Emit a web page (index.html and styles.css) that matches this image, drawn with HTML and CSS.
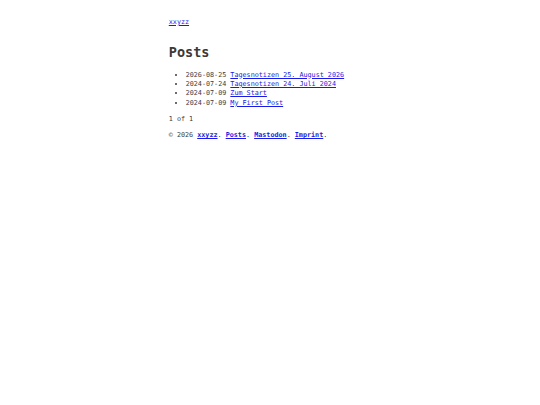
FILE: index.html
```html
<!DOCTYPE html>
<html lang="de">
<head>
<meta charset="utf-8">
<title>Posts</title>
<link rel="stylesheet" href="styles.css">
</head>
<body>
<div class="page">
  <header class="site-header"><a href="#">xxyzz</a></header>
  <main>
    <h1 class="title">Posts</h1>
    <ul class="posts">
      <li>2026-08-25 <a href="#">Tagesnotizen 25. August 2026</a></li>
      <li>2024-07-24 <a href="#">Tagesnotizen 24. Juli 2024</a></li>
      <li>2024-07-09 <a href="#">Zum Start</a></li>
      <li>2024-07-09 <a href="#">My First Post</a></li>
    </ul>
    <p class="pager">1 of 1</p>
  </main>
  <footer class="site-footer">© 2026 <a href="#">xxyzz</a>. <a href="#">Posts</a>. <a href="#">Mastodon</a>. <a href="#">Imprint</a>.</footer>
</div>
</body>
</html>
```
FILE: styles.css
```css
html {
  background: #fff;
}
body {
  margin: 0;
  font-family: "DejaVu Sans Mono", monospace;
  font-size: 6.75px;
  line-height: 1.4;
  color: #3a3a3a;
}
.page {
  max-width: 202.5px;
  margin: 0 auto;
  padding: 17.8px 0;
}
a {
  color: #1a1ae6;
}
.title {
  font-size: 13.5px;
  line-height: 1.2;
  margin: 16.9px 0 10.2px;
}
.posts {
  margin: 0;
  padding-left: 16.875px;
}
.pager {
  margin: 6.75px 0;
}
.site-footer a {
  font-weight: bold;
}
```
